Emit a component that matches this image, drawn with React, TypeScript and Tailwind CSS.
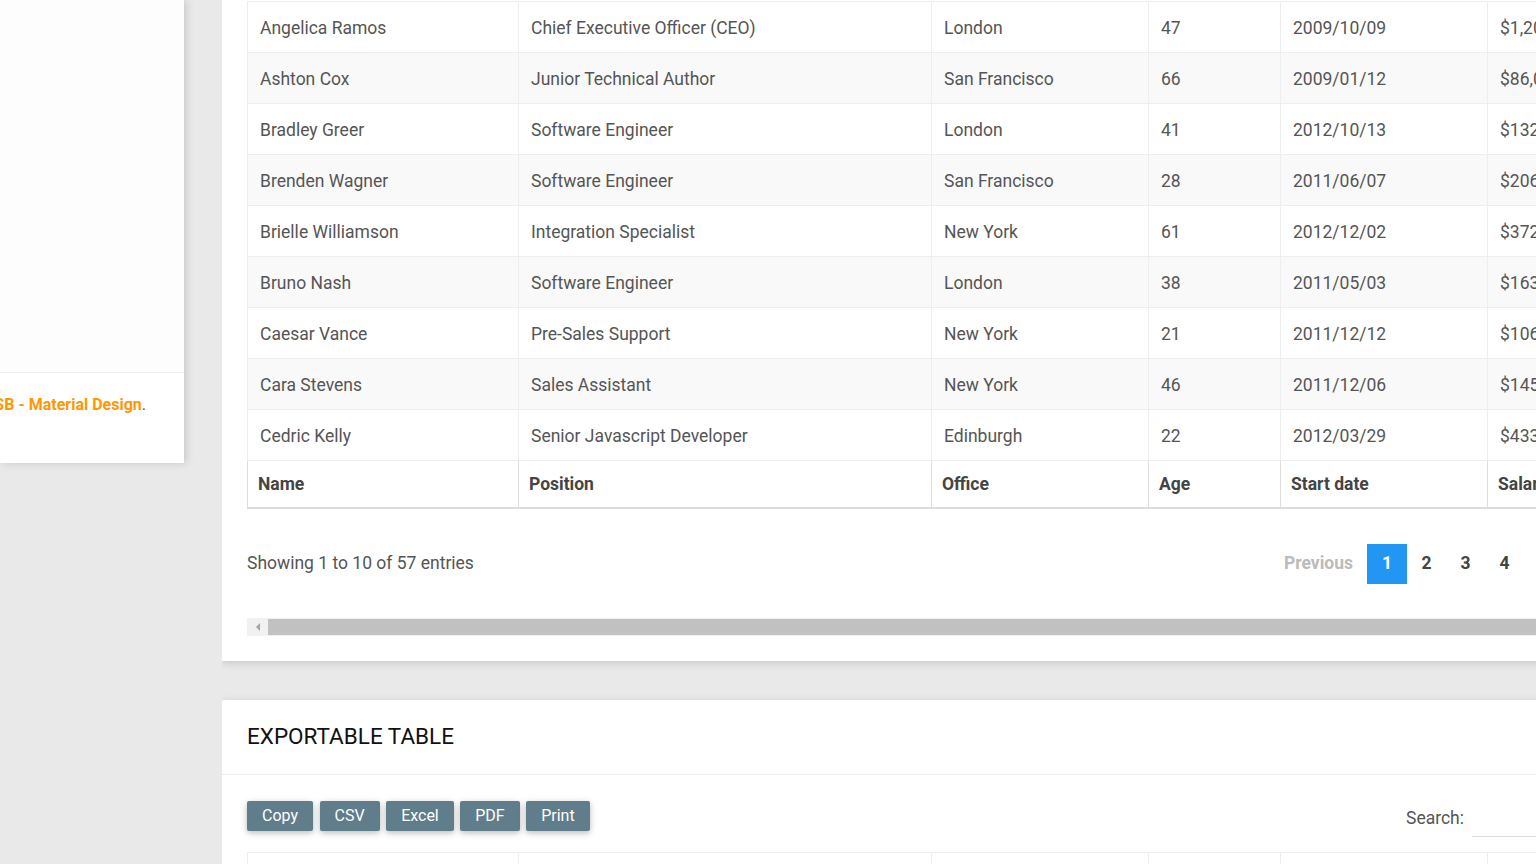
import React from 'react'

const rows = [
  ['Angelica Ramos', 'Chief Executive Officer (CEO)', 'London', '47', '2009/10/09', '$1,200,000'],
  ['Ashton Cox', 'Junior Technical Author', 'San Francisco', '66', '2009/01/12', '$86,000'],
  ['Bradley Greer', 'Software Engineer', 'London', '41', '2012/10/13', '$132,000'],
  ['Brenden Wagner', 'Software Engineer', 'San Francisco', '28', '2011/06/07', '$206,850'],
  ['Brielle Williamson', 'Integration Specialist', 'New York', '61', '2012/12/02', '$372,000'],
  ['Bruno Nash', 'Software Engineer', 'London', '38', '2011/05/03', '$163,500'],
  ['Caesar Vance', 'Pre-Sales Support', 'New York', '21', '2011/12/12', '$106,450'],
  ['Cara Stevens', 'Sales Assistant', 'New York', '46', '2011/12/06', '$145,600'],
  ['Cedric Kelly', 'Senior Javascript Developer', 'Edinburgh', '22', '2012/03/29', '$433,060'],
]

const headers = ['Name', 'Position', 'Office', 'Age', 'Start date', 'Salary']

function Cols() {
  return (
    <colgroup>
      <col className="w-[271px]" />
      <col className="w-[413px]" />
      <col className="w-[217px]" />
      <col className="w-[132px]" />
      <col className="w-[207px]" />
      <col className="w-[200px]" />
    </colgroup>
  )
}

export default function App() {
  return (
    <div
      className="h-[864px] overflow-hidden bg-[#e9e9e9] flex text-[#555]"
      style={{ fontFamily: 'Roboto, "Liberation Sans", sans-serif' }}
    >
      {/* Sidebar (scrolled, only footer visible) */}
      <aside className="w-[184px] shrink-0 self-start h-[463px] bg-white shadow-[2px_0_8px_rgba(0,0,0,0.15)] flex flex-col overflow-hidden">
        <div className="h-[373px] bg-[#fdfdfd] border-b border-[#eee]"></div>
        <div className="flex justify-end pr-[38px] pt-[20px] whitespace-nowrap text-[16px]">
          <span>
            © 2016 - 2017 <span className="font-bold text-[#ff9800]">AdminBSB - Material Design</span>.
          </span>
        </div>
      </aside>

      <main className="flex-1 min-w-0 ml-[38px] overflow-hidden">
        {/* Basic table card */}
        <section className="w-[1400px] bg-white shadow-[0_2px_8px_rgba(0,0,0,0.15)] px-[25px] pt-px pb-[25px]">
          <table className="w-[1440px] table-fixed border-collapse text-[17.5px]">
            <Cols />
            <tbody>
              {rows.map((r, i) => (
                <tr key={r[0]} className={i % 2 === 1 ? 'bg-[#f9f9f9]' : 'bg-white'}>
                  {r.map((c, j) => (
                    <td key={j} className="h-[51px] px-[12px] pt-[2px] border border-[#eee] text-[#555] whitespace-nowrap overflow-hidden">
                      {c}
                    </td>
                  ))}
                </tr>
              ))}
            </tbody>
            <tfoot>
              <tr>
                {headers.map((h) => (
                  <th key={h} className="h-[47px] px-[10px] pt-px text-left font-bold text-[#444] border border-[#ddd] border-b-2 whitespace-nowrap overflow-hidden">
                    {h}
                  </th>
                ))}
              </tr>
            </tfoot>
          </table>

          <div className="flex items-center justify-between w-[1277px] mt-[35px] text-[17.5px]">
            <span className="text-[#555]">Showing 1 to 10 of 57 entries</span>
            <div className="flex items-center font-bold">
              <span className="text-[#bbb] mr-[14px]">Previous</span>
              <span className="w-[40px] h-[40px] bg-[#2196f3] text-white flex items-center justify-center">1</span>
              <span className="w-[39px] h-[40px] flex items-center justify-center text-[#444]">2</span>
              <span className="w-[39px] h-[40px] flex items-center justify-center text-[#444]">3</span>
              <span className="w-[39px] h-[40px] flex items-center justify-center text-[#444]">4</span>
            </div>
          </div>

          {/* horizontal scrollbar */}
          <div className="mt-[34px] h-[18px] bg-[#f1f1f1] flex items-stretch">
            <div className="w-[21px] flex items-center justify-center">
              <svg width="6" height="8" viewBox="0 0 6 8">
                <path d="M5 0 L1 4 L5 8 Z" fill="#a3a3a3" />
              </svg>
            </div>
            <div className="flex-1 my-[1px] bg-[#c1c1c1]"></div>
          </div>
        </section>

        {/* Exportable table card */}
        <section className="w-[1400px] bg-white shadow-[0_2px_8px_rgba(0,0,0,0.15)] mt-[39px] rounded-t-[2px]">
          <div className="h-[75px] px-[25px] flex items-center border-b border-[#eee]">
            <h2 className="text-[22.5px] text-[#111] font-normal">EXPORTABLE TABLE</h2>
          </div>
          <div className="px-[25px] pt-[26px]">
            <div className="flex items-start justify-between w-[1353px] h-[30px]">
              <div className="flex gap-[6.5px]">
                {['Copy', 'CSV', 'Excel', 'PDF', 'Print'].map((b) => (
                  <button
                    key={b}
                    className="h-[30px] px-[15px] bg-[#607d8b] text-white text-[16px] rounded-[2px] shadow-[0_2px_5px_rgba(0,0,0,0.16),0_2px_10px_rgba(0,0,0,0.12)]"
                  >
                    {b}
                  </button>
                ))}
              </div>
              <div className="flex items-center text-[17.5px]">
                <span className="text-[#555]">Search:</span>
                <div className="ml-[8px] w-[128px] h-[36px] border-b border-[#ddd]"></div>
              </div>
            </div>
            <table className="w-[1440px] table-fixed border-collapse text-[17.5px] mt-[21px]">
              <Cols />
              <tbody>
                <tr>
                  {headers.map((h) => (
                    <td key={h} className="h-[51px] border border-[#eee]"></td>
                  ))}
                </tr>
              </tbody>
            </table>
          </div>
        </section>
      </main>
    </div>
  )
}
